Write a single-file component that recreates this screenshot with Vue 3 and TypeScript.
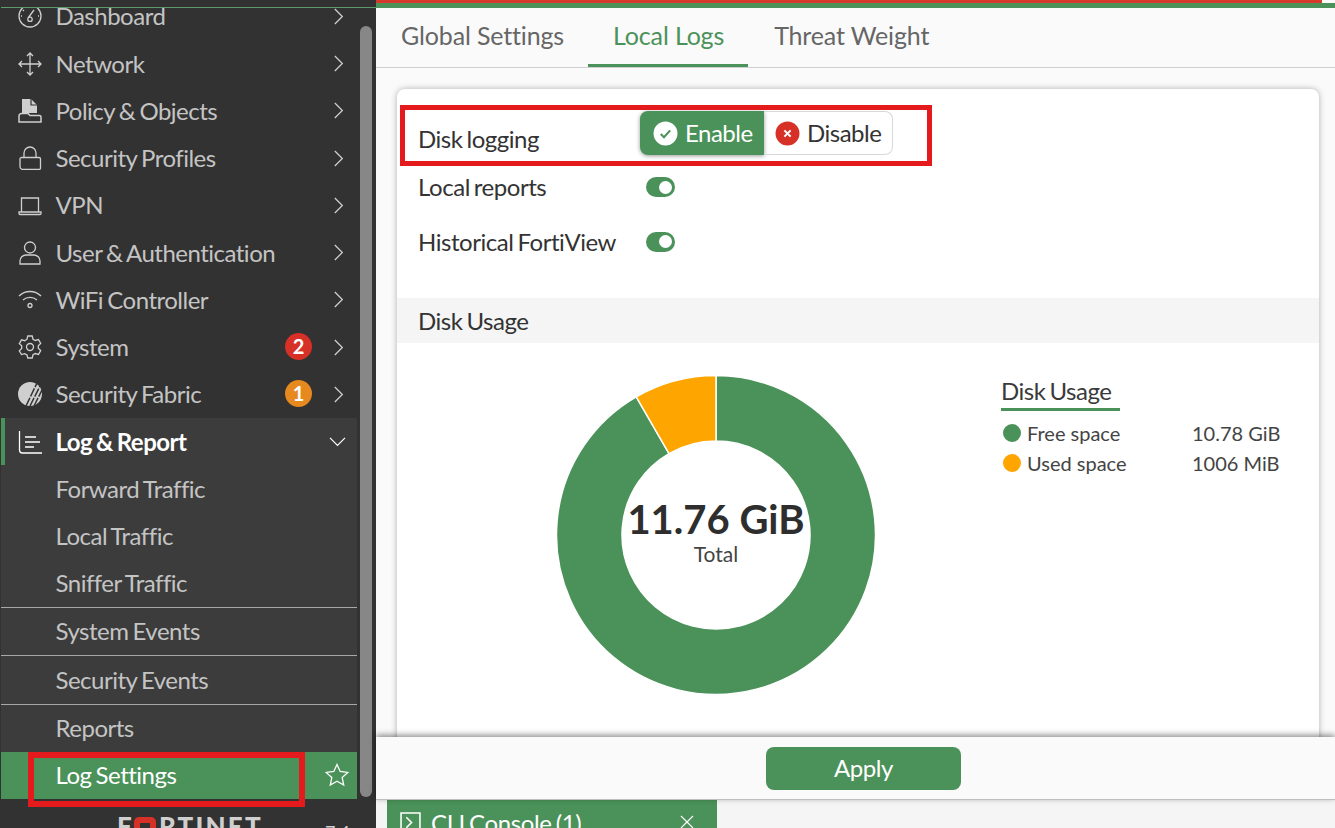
<script setup lang="ts">
type NavItem = { label: string; icon: string; badge?: string; badgeColor?: string }

const icons: Record<string, string> = {
  dashboard: 'M12 1a11 11 0 1 0 0 22a11 11 0 1 0 0-22M10 14l6-8M12 3v1M5 6l1 1M3 12h1M20 12h1M12 13a2.2 2.2 0 1 0 0 4.4a2.2 2.2 0 1 0 0-4.4',
  network: 'M12 1v22M1 12h22M9 4l3-3l3 3M9 20l3 3l3-3M4 9l-3 3l3 3M20 9l3 3l-3 3',
  lock: 'M3 11.500h18a1.500 1.500 0 0 1 1.500 1.500v9a1.500 1.500 0 0 1-1.500 1.500H5a3 3 0 0 1-3-3V13a1.500 1.500 0 0 1 1-1.500M6 11.500V7a6 6 0 0 1 12 0v4.500',
  vpn: 'M3.500 5h17v14h-17zM1 19h22v1.500a1 1 0 0 1-1 1H2a1 1 0 0 1-1-1z',
  user: 'M12 1a5.500 5.500 0 1 0 0 11a5.500 5.500 0 1 0 0-11M2 23v-3a6 6 0 0 1 6-6h8a6 6 0 0 1 6 6v3z',
  wifi: 'M1 8c6-6 16-6 22 0M5 12c4-3.500 10-3.500 14 0M12 15.500a2 2 0 1 0 0 4a2 2 0 1 0 0-4',
  gear: 'M9.800 1h4.400l.8 3.200l2.300 1.300l3.200-.9l2.200 3.800l-2.400 2.300v2.600l2.400 2.300l-2.200 3.800l-3.200-.9l-2.300 1.300l-.8 3.200H9.800L9 20l-2.300-1.300l-3.200.9l-2.200-3.800l2.400-2.300v-2.600L1.300 8.600l2.200-3.800l3.200.9L9 4.200zM12 8.500a3.500 3.500 0 1 0 0 7a3.500 3.500 0 1 0 0-7',
  log: 'M1.500 1v19a3 3 0 0 0 3 3H24M7 7h11M7 12h15M7 17h9'
}

const topItems: NavItem[] = [
  { label: 'Dashboard', icon: 'dashboard' },
  { label: 'Network', icon: 'network' },
  { label: 'Policy & Objects', icon: 'policy' },
  { label: 'Security Profiles', icon: 'lock' },
  { label: 'VPN', icon: 'vpn' },
  { label: 'User & Authentication', icon: 'user' },
  { label: 'WiFi Controller', icon: 'wifi' },
  { label: 'System', icon: 'gear', badge: '2', badgeColor: '#d63027' },
  { label: 'Security Fabric', icon: 'fabric', badge: '1', badgeColor: '#e68a1f' }
]

const subItems = [
  { label: 'Forward Traffic', line: false },
  { label: 'Local Traffic', line: false },
  { label: 'Sniffer Traffic', line: true },
  { label: 'System Events', line: true },
  { label: 'Security Events', line: true },
  { label: 'Reports', line: false }
]

const tabs = ['Global Settings', 'Local Logs', 'Threat Weight']
const toggles = ['Local reports', 'Historical FortiView']

// donut: 1006 MiB used out of 11.76 GiB, drawn from 12 o'clock going left
const usedDeg = 30
function polar(r: number, deg: number): string {
  const a = ((deg - 90) * Math.PI) / 180
  return `${(160 + r * Math.cos(a)).toFixed(2)} ${(160 + r * Math.sin(a)).toFixed(2)}`
}
const usedPath = `M${polar(159.5, -usedDeg)}A159.5 159.5 0 0 1 ${polar(159.5, 0)}L${polar(94, 0)}A94 94 0 0 0 ${polar(94, -usedDeg)}Z`
const freePath = `M${polar(159.5, 0)}A159.5 159.5 0 1 1 ${polar(159.5, -usedDeg)}L${polar(94, -usedDeg)}A94 94 0 1 0 ${polar(94, 0)}Z`
</script>

<template>
  <div class="app">
    <aside class="sidebar">
      <div class="side-top"></div>
      <div class="side-body">
        <nav class="menu">
          <div v-for="item in topItems" :key="item.label" class="row">
            <span class="icon">
              <svg v-if="item.icon === 'policy'" viewBox="0 0 24 24" width="24" height="24">
                <path d="M4 0h9l6 6v8H4z" fill="#cfcfcf" />
                <path d="M13 0v6h6" fill="none" stroke="#333" stroke-width="1.200" />
                <path d="M1 23v-6a2.500 2.500 0 0 1 2.500-2.500H10l2 2h9.500a1.500 1.500 0 0 1 1.500 1.500V23z" fill="#333" stroke="#cfcfcf" stroke-width="1.500" />
              </svg>
              <svg v-else-if="item.icon === 'fabric'" viewBox="0 0 24 24" width="24" height="24">
                <circle cx="12" cy="12" r="12" fill="#cfcfcf" />
                <path d="M8 24L19 1M12 24L22 4M16 24L24 8" fill="none" stroke="#333" stroke-width="1.500" stroke-dasharray="9 1.500" />
              </svg>
              <svg v-else viewBox="0 0 24 24" width="24" height="24" fill="none" stroke="#cfcfcf" stroke-width="1.300">
                <path :d="icons[item.icon]" />
              </svg>
            </span>
            <span class="label">{{ item.label }}</span>
            <span v-if="item.badge" class="badge" :style="{ background: item.badgeColor }">{{ item.badge }}</span>
            <svg class="chev" viewBox="0 0 12 20" width="10" height="17" fill="none" stroke="#cfcfcf" stroke-width="1.500">
              <path d="M1 1l9 9l-9 9" />
            </svg>
          </div>
          <div class="group">
            <div class="row open">
              <span class="icon">
                <svg viewBox="0 0 24 24" width="24" height="24" fill="none" stroke="#fff" stroke-width="1.300">
                  <path :d="icons.log" />
                </svg>
              </span>
              <span class="label">Log &amp; Report</span>
              <svg class="chev down" viewBox="0 0 20 12" width="17" height="10" fill="none" stroke="#fff" stroke-width="1.500">
                <path d="M1 1l9 9l9-9" />
              </svg>
            </div>
            <div v-for="sub in subItems" :key="sub.label" class="row sub" :class="{ line: sub.line }">
              <span class="label">{{ sub.label }}</span>
            </div>
            <div class="row sub active">
              <span class="label">Log Settings</span>
              <svg class="star" viewBox="0 0 24 24" width="24" height="24" fill="none" stroke="#fff" stroke-width="1.300">
                <path d="M12 1.500l3.200 7l7.600.9l-5.600 5.200l1.500 7.500l-6.700-3.800l-6.700 3.800l1.500-7.500L1.200 9.400l7.600-.9z" />
              </svg>
            </div>
          </div>
        </nav>
        <div class="scrollbar"></div>
      </div>
      <div class="side-foot">
        <span class="logo">F<i></i>RTINET</span>
        <span class="ver">7.4</span>
      </div>
    </aside>

    <main class="main">
      <div class="top-strip"></div>
      <div class="tabs">
        <span v-for="tab in tabs" :key="tab" class="tab" :class="{ current: tab === 'Local Logs' }">{{ tab }}</span>
      </div>
      <div class="content">
        <section class="card">
          <div class="settings">
            <div class="set-row first">
              <span class="set-label">Disk logging</span>
              <div class="switch-group">
                <span class="seg on">
                  <svg viewBox="0 0 24 24" width="25" height="25">
                    <circle cx="12" cy="12" r="11.500" fill="#fff" />
                    <path d="M7.500 12.500l3 3l6-6.500" fill="none" stroke="#4a9259" stroke-width="2" />
                  </svg>
                  Enable
                </span>
                <span class="seg off">
                  <svg viewBox="0 0 24 24" width="25" height="25">
                    <circle cx="12" cy="12" r="11.500" fill="#d63027" />
                    <path d="M9 9l6 6M15 9l-6 6" fill="none" stroke="#fff" stroke-width="2" />
                  </svg>
                  Disable
                </span>
              </div>
            </div>
            <div v-for="t in toggles" :key="t" class="set-row">
              <span class="set-label">{{ t }}</span>
              <span class="toggle"><i></i></span>
            </div>
          </div>
          <div class="section-head">Disk Usage</div>
          <div class="usage">
            <div class="donut">
              <svg viewBox="0 0 320 320" width="320" height="320">
                <path :d="freePath" fill="#4a9259" stroke="#fff" stroke-width="1.500" />
                <path :d="usedPath" fill="#ffa500" stroke="#fff" stroke-width="1.500" />
              </svg>
              <div class="donut-text">
                <strong>11.76 GiB</strong>
                <span>Total</span>
              </div>
            </div>
            <div class="legend">
              <div class="legend-title">Disk Usage</div>
              <div class="legend-row">
                <i class="dot" style="background: #4a9259"></i>
                <span class="legend-name">Free space</span>
                <span class="legend-val">10.78 GiB</span>
              </div>
              <div class="legend-row">
                <i class="dot" style="background: #ffa500"></i>
                <span class="legend-name">Used space</span>
                <span class="legend-val">1006 MiB</span>
              </div>
            </div>
          </div>
        </section>
      </div>
      <div class="actions">
        <button class="apply" type="button">Apply</button>
      </div>
      <div class="console-bar">
        <div class="console-tab">
          <svg viewBox="0 0 20 20" width="21" height="21" fill="none" stroke="#fff" stroke-width="1.500">
            <path d="M1 1h18v18H1zM6 5l5 5l-5 5" />
          </svg>
          <span>CLI Console (1)</span>
          <svg class="close" viewBox="0 0 14 14" width="14" height="14" fill="none" stroke="#fff" stroke-width="1.200">
            <path d="M1 1l12 12M13 1L1 13" />
          </svg>
        </div>
      </div>
    </main>

    <div class="mark mark-form"></div>
    <div class="mark mark-nav"></div>
  </div>
</template>

<style scoped>
.app {
  position: relative;
  display: flex;
  width: 1335px;
  height: 828px;
  overflow: hidden;
  font-family: Lato, "Open Sans", sans-serif;
  color: #333;
}

.sidebar {
  width: 376px;
  flex: none;
  display: flex;
  flex-direction: column;
  background: #323232;
}

.side-top {
  height: 7px;
  flex: none;
  border-bottom: 1px solid #5f9a6c;
  margin-left: 1px;
}

.side-body {
  flex: 1;
  display: flex;
  min-height: 0;
  overflow: hidden;
}

.menu {
  width: 357px;
  flex: none;
  margin-top: -15.25px;
}

.row {
  height: 47.25px;
  display: flex;
  align-items: center;
  padding-left: 18px;
  font-size: 24px;
  letter-spacing: -0.5px;
  word-spacing: -1.5px;
  color: #c4c4c4;
  box-sizing: border-box;
}

.icon {
  width: 24px;
  height: 24px;
  margin-right: 14px;
  flex: none;
  display: flex;
}

.label {
  flex: 1;
  white-space: nowrap;
  padding-bottom: 1px;
  margin-left: -0.5px;
}

.chev {
  margin-right: 13px;
  flex: none;
}

.badge {
  width: 27px;
  height: 27px;
  border-radius: 50%;
  margin: 0 22px 2px 0;
  color: #fff;
  font-size: 20px;
  font-weight: 700;
  letter-spacing: 0;
  display: flex;
  align-items: center;
  justify-content: center;
}

.group {
  background: #3c3c3c;
  margin-left: 1px;
  border-radius: 2px 2px 0 0;
}

.open {
  color: #fff;
  font-weight: 700;
  height: 47px;
  border-left: 4px solid #4a9259;
  padding-left: 13px;
}

.chev.down {
  margin-right: 11px;
}

.sub {
  height: 47px;
  padding-left: 55px;
}

.sub.line {
  height: 48.5px;
  border-bottom: 1px solid #a8a8a8;
}

.sub:last-of-type {
  height: 47.5px;
}

.active {
  background: #4a9259;
  color: #fff;
  height: 48px;
}

.star {
  margin-right: 8px;
}

.scrollbar {
  width: 12px;
  margin: 18px 0 3px 3px;
  border-radius: 6px;
  background: #878787;
  flex: none;
}

.side-foot {
  height: 28px;
  flex: none;
  display: flex;
  overflow: hidden;
  padding-left: 117px;
  box-sizing: border-box;
  color: #cfcfcf;
  font-weight: 900;
  font-size: 26px;
  line-height: 28px;
  padding-top: 12px;
}

.logo {
  letter-spacing: 2.2px;
  line-height: 28px;
  height: 28px;
  white-space: nowrap;
}

.logo i {
  display: inline-block;
  width: 22px;
  height: 20px;
  border: 6px solid #d63027;
  box-sizing: border-box;
  border-radius: 5px;
  vertical-align: -1px;
  margin-right: 3px;
}

.ver {
  margin-left: 62px;
  font-size: 18px;
  font-weight: 400;
  line-height: 28px;
  padding-top: 6px;
}

.main {
  flex: 1;
  display: flex;
  flex-direction: column;
  min-width: 0;
  background: #fafafa;
}

.top-strip {
  height: 8px;
  flex: none;
  background: linear-gradient(#4a9259, #4a9259) bottom / 100% 5px no-repeat,
    linear-gradient(#d63a2c, #d63a2c) 0 0 / 946px 3px no-repeat;
}

.tabs {
  height: 60px;
  flex: none;
  display: flex;
  padding-left: 5px;
  border-bottom: 1px solid #cfcfcf;
  box-sizing: border-box;
}

.tab {
  padding: 0 0 0 26px;
  font-size: 25px;
  line-height: 55px;
  letter-spacing: -0.15px;
  color: #666;
  height: 59px;
  box-sizing: border-box;
}

.tab:first-child {
  padding: 0 24px 0 20px;
}

.tab.current {
  color: #4a9259;
  border-bottom: 3px solid #4a9259;
  padding: 0 24px 0 25px;
}

.content {
  flex: 1;
  min-height: 0;
  overflow: hidden;
  padding: 21px 16px 0 21px;
}

.card {
  height: 700px;
  background: #fff;
  border-radius: 8px 8px 0 0;
  box-shadow: 0 0 6px rgba(0, 0, 0, 0.3);
}

.settings {
  padding: 21px 0 0 21px;
  height: 209px;
  box-sizing: border-box;
}

.set-row {
  display: flex;
  align-items: center;
  height: 54.5px;
}

.set-row.first {
  height: 50px;
  align-items: flex-start;
}

.set-label {
  width: 222px;
  flex: none;
  font-size: 24px;
  letter-spacing: -0.45px;
  word-spacing: -1.8px;
  line-height: 56px;
  color: #333;
}

.set-row.first .set-label {
  line-height: 58px;
}

.switch-group {
  display: flex;
  height: 44px;
  margin-top: 1px;
}

.seg {
  display: flex;
  align-items: center;
  gap: 7px;
  font-size: 24px;
  letter-spacing: -0.5px;
  padding-bottom: 2px;
  box-sizing: border-box;
}

.seg svg {
  margin-top: 2px;
}

.seg.on {
  width: 124px;
  padding-left: 13px;
  background: #4a9259;
  color: #fff;
  border-radius: 8px 0 0 8px;
  box-shadow: 0 1px 4px rgba(0, 0, 0, 0.4);
}

.seg.off {
  width: 129px;
  padding-left: 11px;
  border: 1px solid #d8d8d8;
  border-left: none;
  border-radius: 0 8px 8px 0;
  color: #333;
}

.toggle {
  width: 29px;
  height: 20px;
  border-radius: 10px;
  background: #4a9259;
  margin-left: 6px;
  display: flex;
  align-items: center;
  justify-content: flex-end;
  padding-right: 3px;
  box-sizing: border-box;
}

.toggle i {
  width: 13px;
  height: 13px;
  border-radius: 50%;
  background: #fff;
}

.section-head {
  height: 45px;
  background: #f5f5f5;
  padding-left: 21px;
  font-size: 24px;
  letter-spacing: -0.45px;
  word-spacing: -1.8px;
  line-height: 46px;
}

.usage {
  display: flex;
  align-items: flex-start;
  padding: 32px 0 0 159px;
}

.donut {
  position: relative;
  width: 320px;
  height: 320px;
  flex: none;
}

.donut svg {
  display: block;
}

.donut-text {
  position: absolute;
  inset: 0;
  display: flex;
  flex-direction: column;
  align-items: center;
  padding-top: 121px;
  box-sizing: border-box;
  pointer-events: none;
}

.donut-text strong {
  font-size: 40px;
  line-height: 46px;
  font-weight: 700;
  white-space: nowrap;
  color: #2e2e2e;
}

.donut-text span {
  font-size: 21px;
  line-height: 24px;
  color: #444;
}

.legend {
  margin-left: 125px;
  width: 278px;
}

.legend-title {
  width: 119px;
  font-size: 24px;
  letter-spacing: -0.45px;
  word-spacing: -1.8px;
  line-height: 32px;
  padding-bottom: 1px;
  border-bottom: 3px solid #4a9259;
  margin-bottom: 7px;
  white-space: nowrap;
  color: #3a3a3a;
}

.legend-row {
  display: flex;
  align-items: center;
  height: 30px;
  font-size: 20px;
  color: #444;
}

.dot {
  width: 18px;
  height: 18px;
  border-radius: 50%;
  margin: 0 6px 0 2px;
  flex: none;
}

.legend-name {
  width: 165px;
  flex: none;
  white-space: nowrap;
}

.legend-val {
  white-space: nowrap;
}

.actions {
  position: relative;
  height: 63px;
  flex: none;
  display: flex;
  padding: 10px 0 0 390px;
  box-sizing: border-box;
  background: #fafafa;
  border-bottom: 1px solid #bdbdbd;
  box-shadow: 0 -2px 6px rgba(0, 0, 0, 0.45);
}

.apply {
  width: 195px;
  height: 43px;
  border: none;
  border-radius: 8px;
  background: #4a9259;
  color: #fff;
  font-family: inherit;
  font-size: 24px;
  letter-spacing: -0.4px;
  padding: 0 0 2px;
}

.console-bar {
  height: 28px;
  flex: none;
  background: #f5f5f5;
  padding-left: 11px;
  overflow: hidden;
}

.console-tab {
  width: 330px;
  height: 44px;
  background: #4a9259;
  color: #fff;
  display: flex;
  align-items: center;
  gap: 10px;
  padding: 0 23px 0 13px;
  box-sizing: border-box;
  font-size: 24px;
  letter-spacing: -0.4px;
  word-spacing: -1.5px;
}

.console-tab span {
  flex: 1;
  white-space: nowrap;
}

.close {
  flex: none;
}

.mark {
  position: absolute;
  border-style: solid;
  border-color: #e41a1c;
  box-sizing: border-box;
  pointer-events: none;
}

.mark-form {
  left: 400px;
  top: 105px;
  width: 532px;
  height: 61px;
  border-width: 5px;
}

.mark-nav {
  left: 28px;
  top: 752px;
  width: 277px;
  height: 55px;
  border-width: 6px;
}
</style>
